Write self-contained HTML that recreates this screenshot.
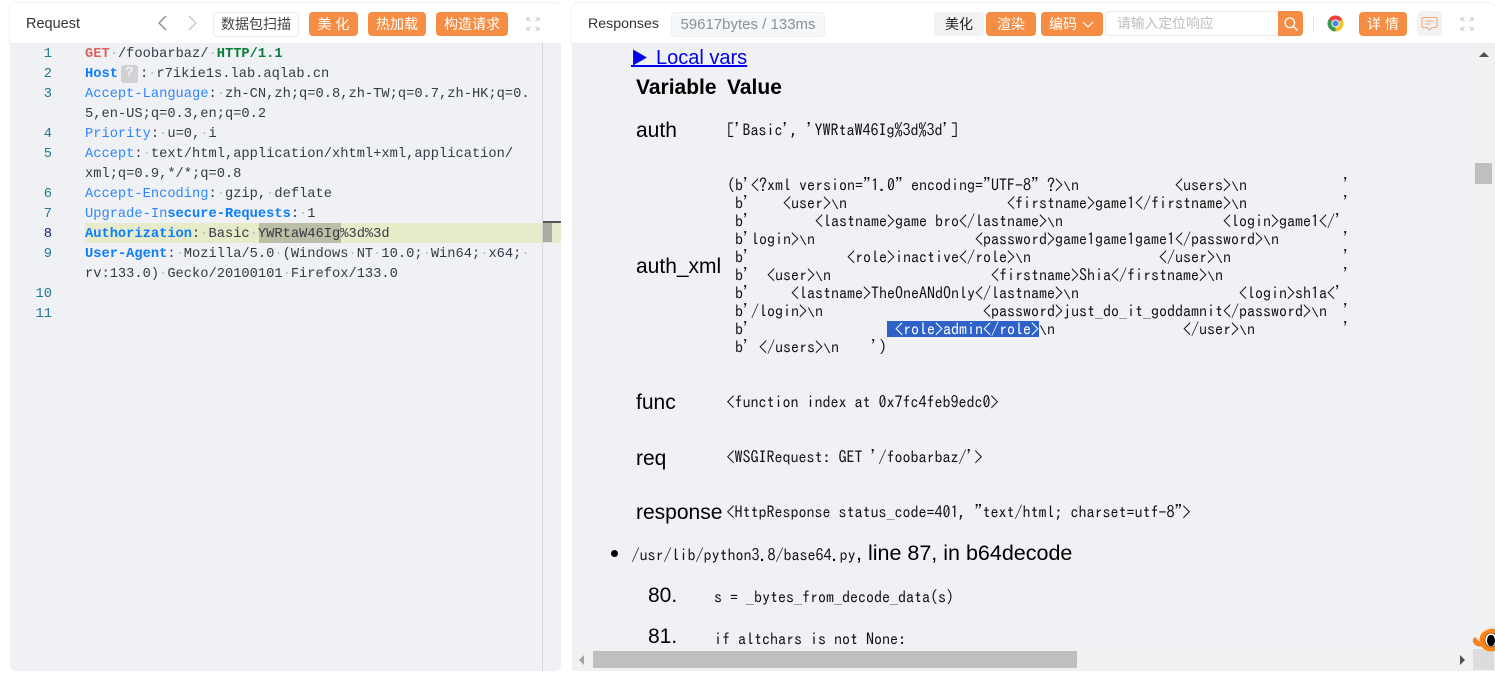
<!DOCTYPE html>
<html lang="zh"><head><meta charset="utf-8"><title>Request / Responses</title>
<style>
html,body{margin:0;padding:0;background:#fff;width:1495px;height:673px;overflow:hidden;font-family:"Liberation Sans","Noto Sans CJK SC",sans-serif}
.a{position:absolute}
.panel{position:absolute;top:3px;height:668px;background:#f0f1f5;border-radius:6px;overflow:hidden}
.hd{position:absolute;top:3px;height:40px;background:#fff;border-bottom:1px solid #eceef2;border-radius:6px 6px 0 0;box-shadow:0 -1px 0 #eff0f3,-1px 0 0 #f3f4f6}
.btn{position:absolute;top:12px;height:24px;line-height:24px;background:#f58d45;color:#fff;border-radius:4px;font-size:14px;text-align:center}
.code{position:absolute;left:85px;font:13.72px/20px "Liberation Mono",monospace;white-space:pre;color:#333b45;height:20px;margin-top:2px}
.ln{position:absolute;width:42px;left:10px;text-align:right;font:13.72px/20px "Liberation Mono",monospace;color:#237893;margin-top:2px}
.k{color:#2e86ff}.b{color:#0b7dff;font-weight:bold}.d{color:#b9bcc2}
.r{position:absolute;font-family:"IPAGothic","Liberation Mono",monospace;font-size:16px;line-height:18px;white-space:pre;color:#111}
.r i{font:normal 13.33px/18px "Liberation Mono",monospace}
.l{position:absolute;font-size:21px;line-height:26px;color:#000;white-space:pre;margin-top:1px}
</style></head><body>

<!-- LEFT PANEL -->
<div class="panel" style="left:10px;width:551px"></div>
<div class="hd" style="left:10px;width:551px"></div>
<div class="a" style="left:26px;top:14px;font-size:14.5px;line-height:20px;color:#333">Request</div>
<svg class="a" style="left:156px;top:14px" width="14" height="18" viewBox="0 0 14 18"><path d="M10 2 L3 9 L10 16" fill="none" stroke="#8a8d92" stroke-width="1.4"/></svg>
<svg class="a" style="left:185px;top:14px" width="14" height="18" viewBox="0 0 14 18"><path d="M4 2 L11 9 L4 16" fill="none" stroke="#c4c6ca" stroke-width="1.4"/></svg>
<div class="a" style="left:213px;top:12px;width:84px;height:23px;line-height:23px;border:1px solid #e8eaee;border-radius:4px;font-size:14px;text-align:center;color:#444;background:#fff">数据包扫描</div>
<div class="btn" style="left:309px;width:49px">美 化</div>
<div class="btn" style="left:368px;width:58px">热加载</div>
<div class="btn" style="left:436px;width:72px">构造请求</div>
<svg class="a" style="left:526px;top:17px" width="14" height="14" viewBox="0 0 14 14"><path d="M1 4V1H4M1 1L4.500 4.500M10 1H13V4M13 1L9.500 4.500M13 10V13H10M13 13L9.500 9.500M4 13H1V10M1 13L4.500 9.500" fill="none" stroke="#c4c8ce" stroke-width="1"/></svg>

<div class="a" style="left:85px;top:223px;width:476px;height:20px;background:#e7ebca"></div>
<div class="a" style="left:259px;top:223px;width:82px;height:20px;background:#bcbfa6"></div>
<div class="a" style="left:542px;top:43px;width:1px;height:628px;background:#d4d5d9"></div>
<div class="a" style="left:543px;top:221px;width:18px;height:2px;background:#55565a"></div>
<div class="a" style="left:543px;top:223px;width:9px;height:19px;background:#a9aba5"></div>

<div class="ln" style="top:43px">1</div>
<div class="ln" style="top:63px">2</div>
<div class="ln" style="top:83px">3</div>
<div class="ln" style="top:123px">4</div>
<div class="ln" style="top:143px">5</div>
<div class="ln" style="top:183px">6</div>
<div class="ln" style="top:203px">7</div>
<div class="ln" style="top:223px;color:#0b216f">8</div>
<div class="ln" style="top:243px">9</div>
<div class="ln" style="top:283px">10</div>
<div class="ln" style="top:303px">11</div>

<div class="code" style="top:43px"><b style="color:#d9635f">GET</b><span class="d">·</span>/foobarbaz/<span class="d">·</span><b style="color:#0b7d3b">HTTP/1.1</b></div>
<div class="code" style="top:63px"><span class="b">Host</span><span class="a" style="left:36px;top:0;width:17px;height:18px;background:#d0d1d3;color:#fff;border-radius:3px;text-align:center;line-height:18px">?</span><span style="margin-left:22px">:</span><span class="d">·</span>r7ikie1s.lab.aqlab.cn</div>
<div class="code" style="top:83px"><span class="k">Accept-Language</span>:<span class="d">·</span>zh-CN,zh;q=0.8,zh-TW;q=0.7,zh-HK;q=0.</div>
<div class="code" style="top:103px">5,en-US;q=0.3,en;q=0.2</div>
<div class="code" style="top:123px"><span class="k">Priority</span>:<span class="d">·</span>u=0,<span class="d">·</span>i</div>
<div class="code" style="top:143px"><span class="k">Accept</span>:<span class="d">·</span>text/html,application/xhtml+xml,application/</div>
<div class="code" style="top:163px">xml;q=0.9,*/*;q=0.8</div>
<div class="code" style="top:183px"><span class="k">Accept-Encoding</span>:<span class="d">·</span>gzip,<span class="d">·</span>deflate</div>
<div class="code" style="top:203px"><span class="k">Upgrade-In</span><span class="b">secure-Requests</span>:<span class="d">·</span>1</div>
<div class="code" style="top:223px"><span class="b">Authorization</span>:<span class="d">·</span>Basic<span class="d">·</span>YWRtaW46Ig%3d%3d</div>
<div class="code" style="top:243px"><span class="b">User-Agent</span>:<span class="d">·</span>Mozilla/5.0<span class="d">·</span>(Windows<span class="d">·</span>NT<span class="d">·</span>10.0;<span class="d">·</span>Win64;<span class="d">·</span>x64;<span class="d">·</span></div>
<div class="code" style="top:263px">rv:133.0)<span class="d">·</span>Gecko/20100101<span class="d">·</span>Firefox/133.0</div>

<!-- RIGHT PANEL -->
<div class="panel" style="left:572px;width:923px"></div>
<div class="hd" style="left:572px;width:923px"></div>
<div class="a" style="left:588px;top:14px;font-size:14.2px;line-height:20px;color:#333">Responses</div>
<div class="a" style="left:671px;top:12px;width:152px;height:23px;line-height:23px;border:1px solid #eceef1;background:#f7f8fa;border-radius:4px;font-size:15px;text-align:center;color:#8a8f99">59617bytes / 133ms</div>
<div class="a" style="left:934px;top:12px;width:50px;height:24px;line-height:24px;background:#f1f2f4;border-radius:4px;font-size:14px;text-align:center;color:#222">美化</div>
<div class="btn" style="left:986px;width:50px">渲染</div>
<div class="btn" style="left:1041px;width:62px;text-align:left;text-indent:8px">编码<svg class="a" style="left:41px;top:9px" width="12" height="8" viewBox="0 0 12 8"><path d="M1 1L6 6L11 1" fill="none" stroke="#fff" stroke-width="1.2"/></svg></div>
<div class="a" style="left:1105px;top:11px;width:172px;height:23px;line-height:23px;border:1px solid #e8eaf0;border-right:0;border-radius:4px 0 0 4px;background:#fff;font-size:13.8px;color:#bdbdbd;text-indent:11px">请输入定位响应</div>
<div class="a" style="left:1278px;top:11px;width:25px;height:25px;background:#f58d45;border-radius:0 4px 4px 0"></div>
<svg class="a" style="left:1283px;top:16px" width="16" height="16" viewBox="0 0 16 16"><circle cx="6.8" cy="6.8" r="4.8" fill="none" stroke="#fff" stroke-width="1.3"/><path d="M10.4 10.4L14.5 14.5" stroke="#fff" stroke-width="1.3"/></svg>
<div class="a" style="left:1313px;top:17px;width:1px;height:15px;background:#e4e5e8"></div>
<svg class="a" style="left:1327px;top:15px" width="17" height="17" viewBox="0 0 32 32">
<path d="M16 16 L3 8.500 A15 15 0 0 1 29 8.500 Z" fill="#e6413a"/>
<path d="M16 16 L3 8.500 A15 15 0 0 0 16 31 Z" fill="#3c9a4e"/>
<path d="M16 16 L29 8.500 A15 15 0 0 1 16 31 Z" fill="#f8c326"/>
<circle cx="16" cy="16" r="7.500" fill="#fff"/><circle cx="16" cy="16" r="5.800" fill="#4a86e8"/></svg>
<div class="btn" style="left:1359px;width:48px">详 情</div>
<div class="a" style="left:1417px;top:11px;width:25px;height:25px;background:#f1f2f4;border-radius:5px"></div>
<svg class="a" style="left:1421px;top:16px" width="17" height="16" viewBox="0 0 17 16"><path d="M2.500 1.500H14.500A1.500 1.500 0 0 1 16 3V10A1.500 1.500 0 0 1 14.500 11.500H11L8.500 14L6 11.500H2.500A1.500 1.500 0 0 1 1 10V3A1.500 1.500 0 0 1 2.500 1.500Z" fill="none" stroke="#f4a778" stroke-width="1.1"/><path d="M4.500 5H12.500M4.500 8H9.500" stroke="#f4a778" stroke-width="1.1"/></svg>
<svg class="a" style="left:1460px;top:17px" width="14" height="14" viewBox="0 0 14 14"><path d="M1 4V1H4M1 1L4.500 4.500M10 1H13V4M13 1L9.500 4.500M13 10V13H10M13 13L9.500 9.500M4 13H1V10M1 13L4.500 9.500" fill="none" stroke="#c4c8ce" stroke-width="1"/></svg>

<!-- response content -->
<div class="a" style="left:631px;top:45px;font-size:20px;line-height:26px;color:#0000ee;text-decoration:underline;white-space:pre"><span style="font-size:17px;letter-spacing:8px">&#9654;</span>Local vars</div>
<div class="l" style="left:636px;top:74px;font-weight:bold">Variable</div>
<div class="l" style="left:727px;top:74px;font-weight:bold">Value</div>

<div class="l" style="left:636px;top:117px">auth</div>
<div class="r" style="left:726.500px;top:121px">['Basic', 'YWRtaW46Ig%3d%3d']</div>

<div class="l" style="left:636px;top:253px">auth_xml</div>
<div class="r" style="left:727px;top:176px">(b'&lt;?xml version="1.0" encoding="UTF-8" ?&gt;<i>\</i>n            &lt;users&gt;<i>\</i>n            '</div>
<div class="r" style="left:727px;top:194px"> b'    &lt;user&gt;<i>\</i>n                    &lt;firstname&gt;game1&lt;/firstname&gt;<i>\</i>n            '</div>
<div class="r" style="left:727px;top:212px"> b'        &lt;lastname&gt;game bro&lt;/lastname&gt;<i>\</i>n                    &lt;login&gt;game1&lt;/'</div>
<div class="r" style="left:727px;top:230px"> b'login&gt;<i>\</i>n                    &lt;password&gt;game1game1game1&lt;/password&gt;<i>\</i>n        '</div>
<div class="r" style="left:727px;top:248px"> b'            &lt;role&gt;inactive&lt;/role&gt;<i>\</i>n                &lt;/user&gt;<i>\</i>n              '</div>
<div class="r" style="left:727px;top:266px"> b'  &lt;user&gt;<i>\</i>n                    &lt;firstname&gt;Shia&lt;/firstname&gt;<i>\</i>n               '</div>
<div class="r" style="left:727px;top:284px"> b'     &lt;lastname&gt;TheOneANdOnly&lt;/lastname&gt;<i>\</i>n                    &lt;login&gt;sh1a&lt;'</div>
<div class="r" style="left:727px;top:302px"> b'/login&gt;<i>\</i>n                    &lt;password&gt;just_do_it_goddamnit&lt;/password&gt;<i>\</i>n  '</div>
<div class="r" style="left:727px;top:320px"> b'                 <span style="background:#2f62c9;color:#fff"> &lt;role&gt;admin&lt;/role&gt;</span><i>\</i>n                &lt;/user&gt;<i>\</i>n           '</div>
<div class="r" style="left:727px;top:338px"> b' &lt;/users&gt;<i>\</i>n    ')</div>

<div class="l" style="left:636px;top:389px">func</div>
<div class="r" style="left:726.500px;top:393px">&lt;function index at 0x7fc4feb9edc0&gt;</div>
<div class="l" style="left:636px;top:445px">req</div>
<div class="r" style="left:726.500px;top:448px">&lt;WSGIRequest: GET '/foobarbaz/'&gt;</div>
<div class="l" style="left:636px;top:499px">response</div>
<div class="r" style="left:726.500px;top:503px">&lt;HttpResponse status_code=401, "text/html; charset=utf-8"&gt;</div>

<div class="a" style="left:611px;top:550px;width:7px;height:7px;border-radius:50%;background:#000"></div>
<div class="r" style="left:631.500px;top:546px">/usr/lib/python3.8/base64.py</div>
<div class="l" style="left:856px;top:539px;font-size:21.500px">, line 87, in b64decode</div>
<div class="l" style="left:648px;top:582px">80.</div>
<div class="r" style="left:714px;top:588px">s = _bytes_from_decode_data(s)</div>
<div class="l" style="left:648px;top:623px">81.</div>
<div class="r" style="left:714px;top:630px">if altchars is not None:</div>

<!-- scrollbars -->
<div class="a" style="left:1473px;top:44px;width:22px;height:607px;background:#f1f1f1"></div>
<div class="a" style="left:1475px;top:163px;width:17px;height:21px;background:#bfbfbf"></div>
<div class="a" style="left:1479px;top:52px;width:0;height:0;border-left:5px solid transparent;border-right:5px solid transparent;border-bottom:5px solid #505050"></div>
<div class="a" style="left:572px;top:649px;width:923px;height:22px;background:#f1f1f1"></div>
<div class="a" style="left:593px;top:651px;width:484px;height:17px;background:#bfbfbf"></div>
<div class="a" style="left:579px;top:655px;width:0;height:0;border-top:5px solid transparent;border-bottom:5px solid transparent;border-right:5px solid #a3a3a3"></div>
<div class="a" style="left:1460px;top:655px;width:0;height:0;border-top:5px solid transparent;border-bottom:5px solid transparent;border-left:5px solid #505050"></div>
<div class="a" style="left:1473px;top:649px;width:21px;height:21px;background:#dcdcdc"></div>

<!-- fish -->
<svg class="a" style="left:1471px;top:622px" width="24" height="34" viewBox="0 0 24 34">
<path d="M12 24 C8 25 3 24 2 19 C2 15 5 15 6 17 C7 20 10 20 12 18Z" fill="#ff8412" stroke="#9a9a9a" stroke-width=".5"/>
<circle cx="20" cy="18" r="11.500" fill="#ff8412"/>
<path d="M11 11 C14 8 19 7 24 6 V4 C19 4 14 6 11 11Z" fill="#e8e8e8"/>
<ellipse cx="20" cy="18" rx="6" ry="7" fill="#fff" stroke="#333" stroke-width=".6"/>
<ellipse cx="20" cy="18.500" rx="4" ry="5.800" fill="#000"/>
</svg>
</body></html>
